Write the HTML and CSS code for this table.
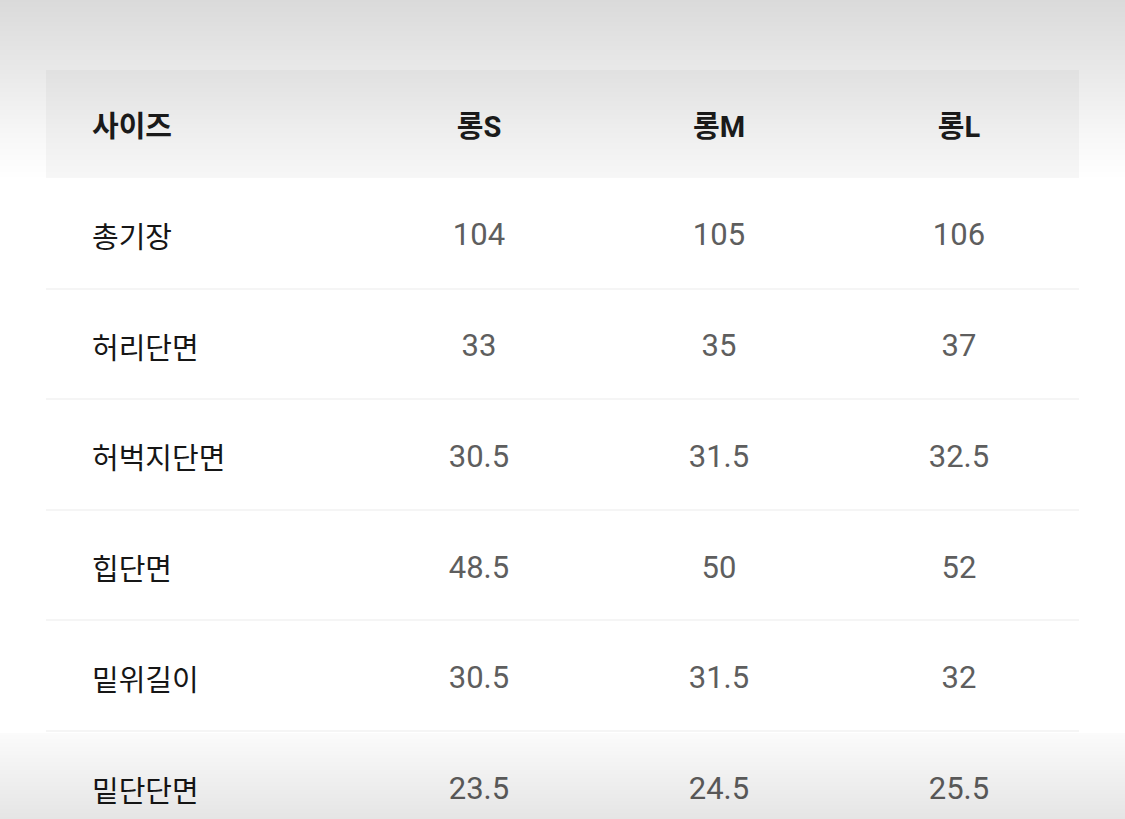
FILE: index.html
```html
<!DOCTYPE html>
<html lang="ko">
<head>
<meta charset="utf-8">
<title>사이즈</title>
<link rel="stylesheet" href="styles.css">
</head>
<body>
<div class="page">
  <table class="size-table">
    <colgroup>
      <col class="col-label">
      <col class="col-size">
      <col class="col-size">
      <col class="col-size">
    </colgroup>
    <thead>
      <tr>
        <th class="label">사이즈</th>
        <th>롱S</th>
        <th>롱M</th>
        <th>롱L</th>
      </tr>
    </thead>
    <tbody>
      <tr><td class="label">총기장</td><td>104</td><td>105</td><td>106</td></tr>
      <tr><td class="label">허리단면</td><td>33</td><td>35</td><td>37</td></tr>
      <tr><td class="label">허벅지단면</td><td>30.5</td><td>31.5</td><td>32.5</td></tr>
      <tr><td class="label">힙단면</td><td>48.5</td><td>50</td><td>52</td></tr>
      <tr><td class="label">밑위길이</td><td>30.5</td><td>31.5</td><td>32</td></tr>
      <tr><td class="label">밑단단면</td><td>23.5</td><td>24.5</td><td>25.5</td></tr>
    </tbody>
  </table>
</div>
<div class="shade-top"></div>
<div class="shade-bottom"></div>
</body>
</html>
```

FILE: styles.css
```css
html, body {
  margin: 0;
  padding: 0;
  background: #ffffff;
  height: 100%;
  overflow: hidden;
}

.page {
  padding: 70px 46px 0 46px;
}

.size-table {
  width: 1033px;
  border-collapse: collapse;
  table-layout: fixed;
  font-family: Roboto, "Noto Sans CJK KR", sans-serif;
}

.col-label { width: 313px; }
.col-size { width: 240px; }

.size-table thead tr {
  background: #f7f7f7;
  height: 108px;
}

.size-table th {
  font-size: 29px;
  font-weight: 700;
  color: #1c1c1c;
  text-align: center;
  padding: 0;
  vertical-align: middle;
}

.size-table tbody tr {
  height: 110.6px;
}

.size-table tbody tr + tr {
  border-top: 2px solid #f5f5f5;
}

.size-table td {
  font-size: 31px;
  font-weight: 400;
  color: #5e5e5e;
  text-align: center;
  padding: 4px 0 0 0;
  vertical-align: middle;
}

.size-table .label {
  text-align: left;
  padding-left: 46px;
  font-family: "Noto Sans CJK KR", sans-serif;
  font-size: 29px;
  font-weight: 400;
  color: #161616;
}

.size-table th.label {
  font-weight: 700;
  color: #1c1c1c;
  padding-top: 0;
}

.shade-top {
  position: fixed;
  left: 0;
  top: 0;
  width: 100%;
  height: 180px;
  background: linear-gradient(to bottom, rgba(0,0,0,0.145) 0%, rgba(0,0,0,0.085) 40%, rgba(0,0,0,0.03) 75%, rgba(0,0,0,0) 100%);
  pointer-events: none;
}

.shade-bottom {
  position: fixed;
  left: 0;
  top: 733px;
  width: 100%;
  height: 86px;
  background: linear-gradient(to bottom, rgba(0,0,0,0.015) 0%, rgba(0,0,0,0.06) 50%, rgba(0,0,0,0.1) 100%);
  pointer-events: none;
}
```
